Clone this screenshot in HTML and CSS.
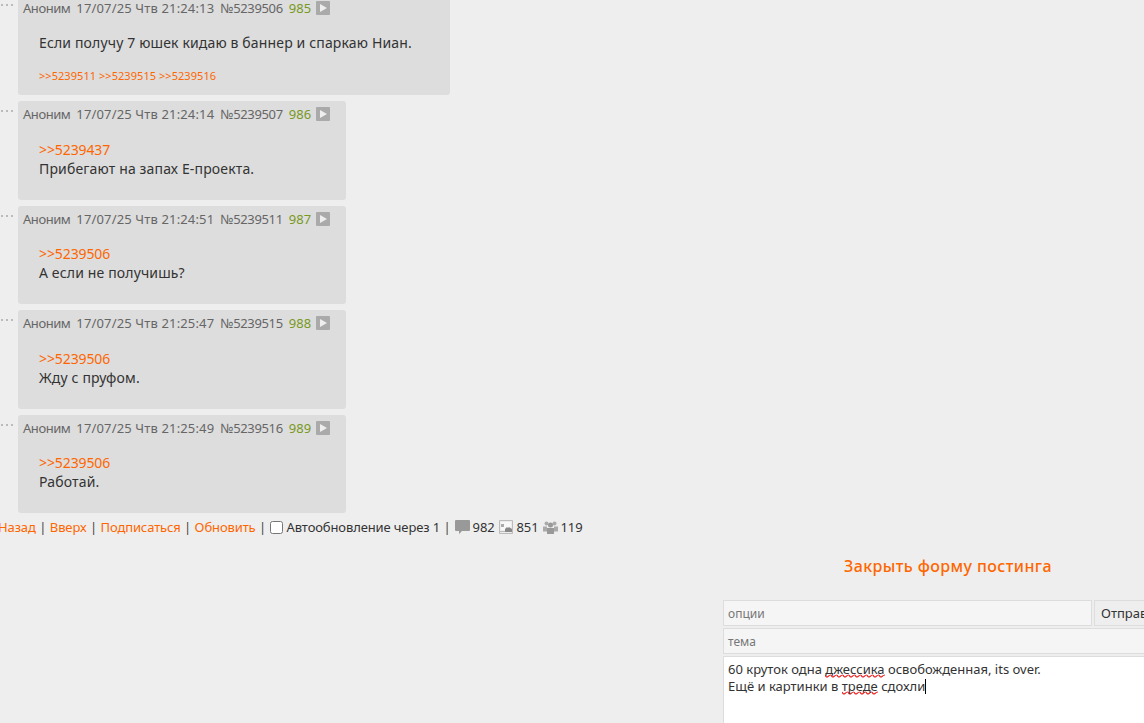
FILE: index.html
```html
<!DOCTYPE html>
<html lang="ru">
<head>
  <meta charset="UTF-8">
  <title>Тред</title>
  <link rel="stylesheet" href="styles.css">
</head>
<body>
  <div class="thread">
    <div class="post-row">
      <div class="dots"></div>
      <div class="post first">
        <div class="post-head">
          <span class="name">Аноним</span><span class="date">17/07/25 Чтв 21:24:13</span><span class="no">№5239506</span><span class="num">985</span><span class="play"></span>
        </div>
        <div class="msg">Если получу 7 юшек кидаю в баннер и спаркаю Ниан.</div>
        <div class="refs"><a>&gt;&gt;5239511</a> <a>&gt;&gt;5239515</a> <a>&gt;&gt;5239516</a></div>
      </div>
    </div>
    <div class="post-row">
      <div class="dots"></div>
      <div class="post">
        <div class="post-head">
          <span class="name">Аноним</span><span class="date">17/07/25 Чтв 21:24:14</span><span class="no">№5239507</span><span class="num">986</span><span class="play"></span>
        </div>
        <div class="msg"><a>&gt;&gt;5239437</a><br>Прибегают на запах Е-проекта.</div>
      </div>
    </div>
    <div class="post-row">
      <div class="dots"></div>
      <div class="post">
        <div class="post-head">
          <span class="name">Аноним</span><span class="date">17/07/25 Чтв 21:24:51</span><span class="no">№5239511</span><span class="num">987</span><span class="play"></span>
        </div>
        <div class="msg"><a>&gt;&gt;5239506</a><br>А если не получишь?</div>
      </div>
    </div>
    <div class="post-row">
      <div class="dots"></div>
      <div class="post">
        <div class="post-head">
          <span class="name">Аноним</span><span class="date">17/07/25 Чтв 21:25:47</span><span class="no">№5239515</span><span class="num">988</span><span class="play"></span>
        </div>
        <div class="msg"><a>&gt;&gt;5239506</a><br>Жду с пруфом.</div>
      </div>
    </div>
    <div class="post-row">
      <div class="dots"></div>
      <div class="post">
        <div class="post-head">
          <span class="name">Аноним</span><span class="date">17/07/25 Чтв 21:25:49</span><span class="no">№5239516</span><span class="num">989</span><span class="play"></span>
        </div>
        <div class="msg"><a>&gt;&gt;5239506</a><br>Работай.</div>
      </div>
    </div>
  </div>

  <div class="nav">
    <a>Назад</a><i class="sep">|</i><a>Вверх</a><i class="sep">|</i><a>Подписаться</a><i class="sep">|</i><a>Обновить</a><i class="sep">|</i>
    <input type="checkbox" class="auto"><span>Автообновление через 1</span><i class="sep tight">|</i>
    <svg class="ico" width="15" height="15" viewBox="0 0 15 15"><path fill="#999" d="M1 0h13a1 1 0 0 1 1 1v9a1 1 0 0 1-1 1H7l-3 3v-3H1a1 1 0 0 1-1-1V1a1 1 0 0 1 1-1z"/></svg><span>982</span>
    <svg class="ico" width="15" height="15" viewBox="0 0 15 15"><path fill="#ececec" stroke="#bbb" d="M.5 .5h13v13H.5z"/><path fill="#f8f8f8" d="M2 2h10v8H2z"/><path fill="#aaa" d="M2 4h3v3H2z"/><path fill="#888" d="M6 12V9l2-2 1 1 1-1 3 2v3z"/><path fill="#bbb" d="M1 11h5v1H1z"/></svg><span>851</span>
    <svg class="ico" width="15" height="15" viewBox="0 0 15 15"><g fill="#aaa"><circle cx="3.5" cy="3.5" r="2"/><circle cx="11.5" cy="3.5" r="2"/><path d="M0 6.5h4v5H0zM11 6.5h4v5h-4z"/></g><g fill="#999"><circle cx="7.5" cy="5" r="2.5"/><path d="M4 8h7v6H4z"/></g></svg><span>119</span>
  </div>

  <div class="form-title"><a>Закрыть форму постинга</a></div>

  <div class="postform">
    <div class="form-line">
      <div class="field opts">опции</div>
      <div class="submit">Отправить</div>
    </div>
    <div class="field">тема</div>
    <div class="text-box">60 круток одна <span class="typo">джессика</span> освобожденная, its over.<br>Ещё и картинки в <span class="typo">треде</span> сдохли<span class="caret"></span></div>
  </div>
</body>
</html>
```

FILE: styles.css
```css
html, body {
  height: 100%;
}
body {
  margin: 0;
  background: #eeeeee;
  color: #333;
  font-family: "Noto Sans", sans-serif;
  font-size: 14px;
  overflow: hidden;
}
a {
  color: #ff6600;
}
.thread {
  margin-top: -5px;
  display: flex;
  flex-direction: column;
  gap: 6px;
}
.post-row {
  display: flex;
  align-items: flex-start;
}
.dots {
  width: 18px;
  flex: none;
}
.dots::before {
  content: "";
  display: block;
  width: 2px;
  height: 2px;
  margin: 9px 0 0 1px;
  background: #bbb;
  box-shadow: 5px 0 #bbb, 10px 0 #bbb;
}
.post {
  background: #dddddd;
  border-radius: 3px;
  width: 328px;
  height: 98.5px;
  padding: 4px 5px;
  box-sizing: border-box;
}
.post.first {
  width: 432px;
  height: 100px;
}
.post-head {
  display: flex;
  align-items: center;
  gap: 6px;
  color: #666;
  font-size: 13px;
  line-height: 18px;
}
.name {
  letter-spacing: -0.45px;
}
.date {
  letter-spacing: 0.15px;
}
.no {
  letter-spacing: -0.35px;
}
.num {
  color: #789922;
}
.play {
  width: 14px;
  height: 14px;
  margin-left: -1px;
  background: #aaa;
  border-radius: 1px;
  position: relative;
}
.play::after {
  content: "";
  position: absolute;
  left: 4px;
  top: 3px;
  border-left: 7px solid #eee;
  border-top: 4px solid transparent;
  border-bottom: 4px solid transparent;
}
.msg {
  margin: 16.6px 16px 0;
  line-height: 19px;
  font-size: 14px;
  letter-spacing: 0.15px;
}
.msg a {
  letter-spacing: -0.1px;
}
.first .msg {
  margin-top: 16px;
}
.refs {
  margin: 16px 16px 0;
  font-size: 11px;
  letter-spacing: 0.05px;
}
.nav {
  margin: 6px 0 0 -2px;
  display: flex;
  align-items: center;
  height: 16px;
  font-size: 13px;
  letter-spacing: -0.12px;
  white-space: nowrap;
}
.sep {
  font-style: normal;
  margin: 0 3.5px;
  color: #444;
}
.sep.tight {
  margin-right: 0;
}
.auto {
  margin: 0 4px 0 0;
}
.ico {
  margin: 0 3px 0 4px;
}
.form-title {
  margin: 22px 0 0 723px;
  width: 450px;
  text-align: center;
  font-size: 16px;
  font-weight: 500;
  line-height: 18px;
  letter-spacing: 0.4px;
}
.postform {
  margin: 25px 0 0 723px;
  width: 500px;
  display: flex;
  flex-direction: column;
  gap: 2px;
}
.form-line {
  display: flex;
  gap: 2px;
}
.field {
  box-sizing: border-box;
  height: 26px;
  line-height: 25px;
  padding: 0 4px;
  background: #f5f5f5;
  border: 1px solid #ddd;
  color: #777;
  font-size: 12px;
}
.opts {
  width: 369px;
}
.submit {
  box-sizing: border-box;
  flex: 1;
  height: 26px;
  line-height: 24px;
  padding: 0 6px;
  background: #eee;
  border: 1px solid #ddd;
  font-size: 13px;
}
.text-box {
  box-sizing: border-box;
  height: 120px;
  padding: 4px;
  background: #fff;
  border: 1px solid #ddd;
  font-size: 13px;
  line-height: 17px;
}
.typo {
  background: url("data:image/svg+xml,%3Csvg xmlns='http://www.w3.org/2000/svg' width='6' height='4'%3E%3Cpath d='M0 1Q1.5 4 3 2.500T6 1' fill='none' stroke='%23e22' stroke-width='1.2'/%3E%3C/svg%3E") repeat-x left bottom;
}
.caret {
  display: inline-block;
  width: 1px;
  height: 15px;
  background: #000;
  vertical-align: -3px;
}
```
